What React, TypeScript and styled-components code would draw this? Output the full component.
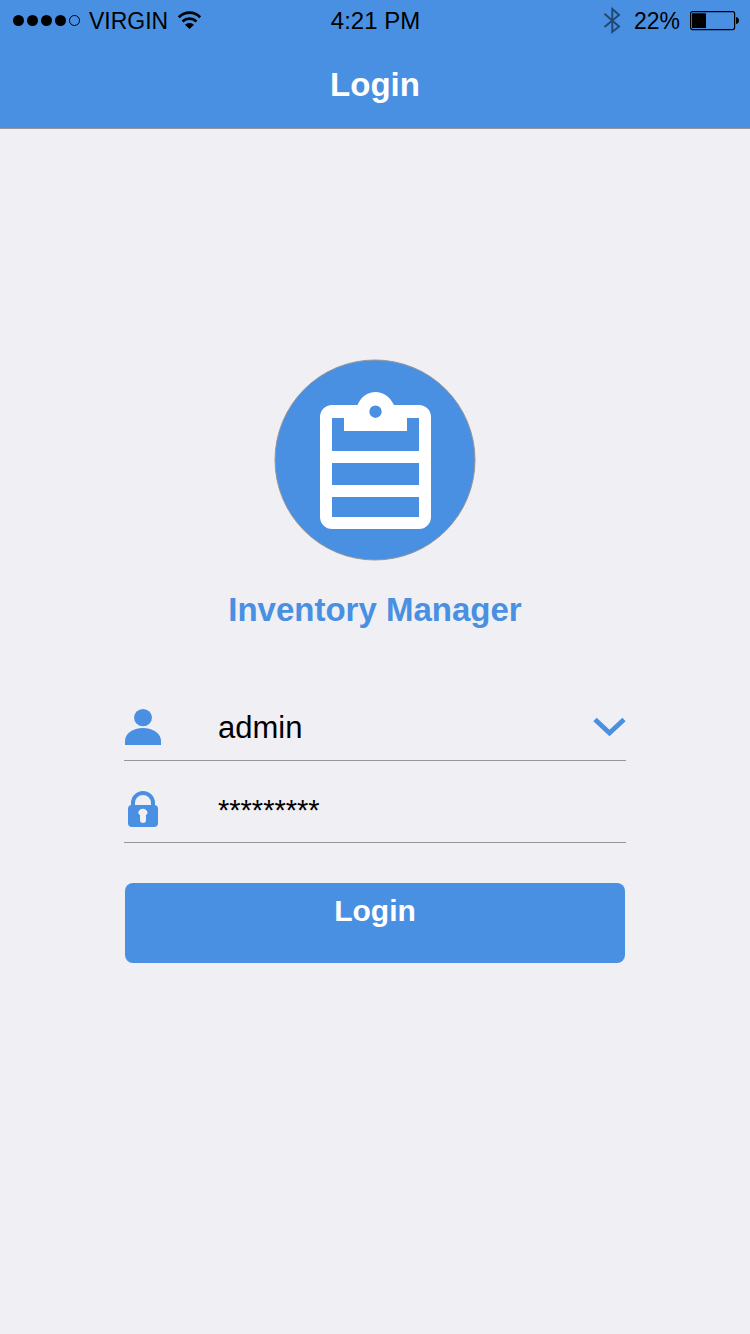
import React from "react";
import styled, { createGlobalStyle } from "styled-components";

const blue = "#4990e2";
const paper = "#efeff4";
const rule = "#979797";

const GlobalStyle = createGlobalStyle`
  * { box-sizing: border-box; }
  body {
    margin: 0;
    background: ${paper};
    font-family: "Liberation Sans", Arial, sans-serif;
    color: #000;
  }
`;

const Header = styled.header`
  background: ${blue};
  border-bottom: 1px solid ${rule};
`;

const StatusBar = styled.div`
  display: grid;
  grid-template-columns: 1fr auto 1fr;
  align-items: center;
  height: 42px;
  padding: 0 11px 0 12px;
  font-size: 23px;
  line-height: 40px;
`;

const StatusGroup = styled.div<{ $end?: boolean }>`
  display: flex;
  align-items: center;
  justify-content: ${(p) => (p.$end ? "flex-end" : "flex-start")};
  gap: ${(p) => (p.$end ? "10px" : "9px")};
`;

const Clock = styled.time`
  font-size: 24px;
`;

const NavBar = styled.div`
  display: flex;
  align-items: center;
  justify-content: center;
  height: 86px;
`;

const Title = styled.h1`
  margin: 0;
  font-size: 33px;
  line-height: 40px;
  font-weight: bold;
  color: #fff;
`;

const Main = styled.main`
  display: flex;
  flex-direction: column;
  align-items: center;
  padding: 230px 24px 40px;
`;

const Logo = styled.svg`
  display: block;
`;

const AppName = styled.h2`
  margin: 29px 0 63px;
  font-size: 33px;
  line-height: 40px;
  font-weight: bold;
  color: ${blue};
`;

const Form = styled.form`
  display: flex;
  flex-direction: column;
  gap: 14px;
  width: 100%;
  max-width: 502px;
`;

const Field = styled.div`
  display: flex;
  align-items: center;
  height: 68px;
  border-bottom: 1px solid ${rule};
`;

const FieldLabel = styled.label`
  display: flex;
  flex: none;
  width: 94px;
  padding-left: 1px;
`;

const SelectWrap = styled.div`
  display: grid;
  flex: 1;
  align-items: center;

  & > * {
    grid-area: 1 / 1;
  }
`;

const UserSelect = styled.select`
  appearance: none;
  width: 100%;
  height: 42px;
  padding: 2px 0 0;
  border: 0;
  background: transparent;
  color: #000;
  font: 31px/40px "Liberation Sans", Arial, sans-serif;
`;

const Chevron = styled.svg`
  justify-self: end;
  pointer-events: none;
`;

const SecretInput = styled.input`
  flex: 1;
  min-width: 0;
  height: 44px;
  padding: 4px 0 0;
  border: 0;
  background: transparent;
  color: #000;
  font: 29px/40px "Liberation Sans", Arial, sans-serif;
`;

const SubmitButton = styled.button`
  display: flex;
  justify-content: center;
  align-items: flex-start;
  height: 80px;
  margin: 26px 1px 0;
  padding: 8px 16px;
  border: 0;
  border-radius: 8px;
  background: ${blue};
  color: #fff;
  font: bold 30px/40px "Liberation Sans", Arial, sans-serif;
`;

const SignalIcon = () => (
  <svg width="68" height="12" viewBox="0 0 68 12" role="img" aria-label="Signal strength">
    {[6.5, 20.5, 34.5, 48.5].map((cx) => (
      <circle key={cx} cx={cx} cy="5.5" r="5.5" />
    ))}
    <circle cx="62.5" cy="5.5" r="5" fill="none" stroke="#000" />
  </svg>
);

const WifiIcon = () => (
  <svg width="26" height="20" viewBox="0 0 26 20" role="img" aria-label="Wi-Fi">
    <g fill="none" stroke="#000" strokeWidth="2.7">
      <path d="M1.8 6.2C8.200 .2 16.800 .2 23.200 6.200" />
      <path d="M5.500 10.500C9.600 6.700 15.400 6.700 19.500 10.500" />
    </g>
    <path d="M8 13.800C10.700 11.500 14.300 11.500 17 13.800L12.500 18Z" />
  </svg>
);

const BluetoothIcon = () => (
  <svg width="21" height="28" viewBox="0 0 21 28" role="img" aria-label="Bluetooth">
    <path
      d="M1.500 6.700L16 19.500L9.300 25V2L16 8L1.500 20"
      fill="none"
      stroke="#000"
      strokeOpacity=".5"
      strokeWidth="2"
    />
  </svg>
);

const BatteryIcon = () => (
  <svg width="49" height="20" viewBox="0 0 49 20" role="img" aria-label="Battery">
    <rect x=".6" y=".6" width="44" height="18" rx="2" fill="none" stroke="#000" strokeWidth="1.2" />
    <rect x="2" y="2.2" width="14" height="14.800" rx=".5" />
    <path d="M46 6Q49 6.500 49 9.500T46 13Z" />
  </svg>
);

const ClipboardLogo = () => (
  <Logo width="202" height="202" viewBox="0 0 202 202" aria-hidden="true">
    <circle cx="101" cy="101" r="100" fill={blue} stroke={rule} />
    <path
      fill="#fff"
      fillRule="evenodd"
      d="M58 46H83.5C87 38 93.500 33 101.500 33S116 38 120 46H145A12 12 0 0 1 157 58V158A12 12 0 0 1 145 170H58A12 12 0 0 1 46 158V58A12 12 0 0 1 58 46ZM58 59V92H145V59H133V72H70V59ZM58 104V126H145V104ZM58 138V158H145V138ZM107.700 52.700A6.200 6.200 0 1 0 95.300 52.700A6.200 6.200 0 1 0 107.700 52.700Z"
    />
  </Logo>
);

const PersonIcon = () => (
  <svg width="36" height="36" viewBox="0 0 36 36" fill={blue} aria-hidden="true">
    <ellipse cx="18" cy="8.600" rx="9" ry="8.600" />
    <path d="M0 36V32C0 24.500 8 19 18 19S36 24.500 36 32V36Z" />
  </svg>
);

const LockIcon = () => (
  <svg width="36" height="36" viewBox="0 0 36 36" fill={blue} aria-hidden="true">
    <path
      fillRule="evenodd"
      d="M6 14V12A12 12 0 0 1 30 12V14Q33 14.500 33 18V32Q33 36 29 36H7Q3 36 3 32V18Q3 14.500 6 14ZM10 14H26V12A8 8 0 0 0 10 12ZM15 24V29A3 3 0 0 0 21 29V24C22 23.500 22.500 23 22.500 21.800A4.600 4 0 0 0 13.300 21.800C13.300 23 14 23.500 15 24Z"
    />
  </svg>
);

export default function App() {
  return (
    <>
      <GlobalStyle />
      <Header>
        <StatusBar>
          <StatusGroup>
            <SignalIcon />
            <span>VIRGIN</span>
            <WifiIcon />
          </StatusGroup>
          <Clock>4:21 PM</Clock>
          <StatusGroup $end>
            <BluetoothIcon />
            <span>22%</span>
            <BatteryIcon />
          </StatusGroup>
        </StatusBar>
        <NavBar>
          <Title>Login</Title>
        </NavBar>
      </Header>
      <Main>
        <ClipboardLogo />
        <AppName>Inventory Manager</AppName>
        <Form onSubmit={(e) => e.preventDefault()}>
          <Field>
            <FieldLabel htmlFor="user" aria-label="User">
              <PersonIcon />
            </FieldLabel>
            <SelectWrap>
              <UserSelect id="user" defaultValue="admin">
                <option value="admin">admin</option>
              </UserSelect>
              <Chevron width="33" height="20" viewBox="0 0 33 20" aria-hidden="true">
                <path d="M2 2.500L16.500 16L31 2.500" fill="none" stroke={blue} strokeWidth="4.800" />
              </Chevron>
            </SelectWrap>
          </Field>
          <Field>
            <FieldLabel htmlFor="password" aria-label="Password">
              <LockIcon />
            </FieldLabel>
            <SecretInput id="password" type="text" autoComplete="off" defaultValue="*********" />
          </Field>
          <SubmitButton type="submit">Login</SubmitButton>
        </Form>
      </Main>
    </>
  );
}
